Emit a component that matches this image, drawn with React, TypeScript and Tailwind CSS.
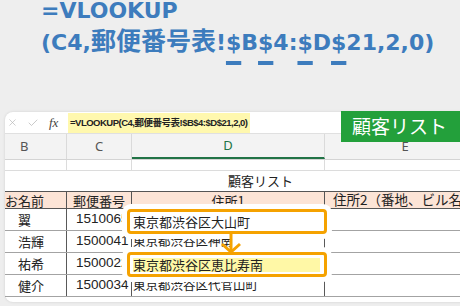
import React from "react";
import { X, Check } from "lucide-react";

const U = ({ children }: { children: React.ReactNode }) => (
  <span className="underline decoration-[4px] underline-offset-[11px] [text-decoration-skip-ink:none]">
    {children}
  </span>
);

const cols = "grid grid-cols-[62px_65px_193px_1fr]";

export default function App() {
  const rows = [
    { name: "翼", zip: "1510065", addr: "" },
    { name: "浩輝", zip: "1500041", addr: "東京都渋谷区神南" },
    { name: "祐希", zip: "1500022", addr: "" },
    { name: "健介", zip: "1500034", addr: "東京都渋谷区代官山町" },
  ];
  return (
    <div className="w-[460px] h-[306px] bg-[#eeeeee] overflow-hidden font-['Liberation_Sans','Noto_Sans_CJK_JP',sans-serif]">
      {/* Title formula */}
      <div className="h-[112px] pl-[41px] font-bold text-[#3d7cbd] text-[22px] leading-[22px] font-['DejaVu_Sans','Noto_Sans_CJK_JP',sans-serif] whitespace-nowrap">
        <div className="h-[22px]">=VLOOKUP</div>
        <div className="mt-[6px] h-[22px]">
          (C4,
          <span className="font-['Noto_Sans_CJK_JP',sans-serif] text-[25px]">郵便番号表</span>!<U>$</U>B<U>$</U>4:<U>$</U>D<U>$</U>21,2,0)
        </div>
      </div>

      {/* Card */}
      <div className="relative ml-[5px] w-[480px] h-[190px] bg-white rounded-[8px] shadow-[0_0_3px_rgba(0,0,0,0.12)]">
        {/* Formula bar */}
        <div className="flex h-[22px] border-b border-[#e0e0e0]">
          <div className="w-[63px] flex items-center">
            <X size={11} strokeWidth={1.4} className="ml-[2px] text-[#b3b3b3]" />
            <Check size={12} strokeWidth={1.4} className="ml-[9px] text-[#b3b3b3]" />
            <span className="ml-[10px] italic text-[13px] text-[#444] font-['Liberation_Serif',serif]">fx</span>
          </div>
          <div className="mt-[1px] h-[20px] w-[182px] bg-[#fff8ae] flex items-center pl-[2px] text-[9.5px] font-bold tracking-[-0.5px] text-[#222] whitespace-nowrap">
            =VLOOKUP(C4,郵便番号表!$B$4:$D$21,2,0)
          </div>
        </div>

        {/* Column headers */}
        <div className={`${cols} h-[26px] bg-[#f3f3f3] border-b border-[#d4d4d4] text-[13px] text-[#555] font-['Noto_Sans',sans-serif]`}>
          <div className="flex items-center pl-[15px] border-r border-[#dadada]">B</div>
          <div className="flex items-center justify-center border-r border-[#dadada]">C</div>
          <div className="flex items-center justify-center border-r border-[#dadada] border-b-2 border-b-[#217346] text-[#217346]">D</div>
          <div className="flex items-center justify-center">E</div>
        </div>

        {/* Row 1 strip */}
        <div className={`${cols} h-[11px] border-b border-[#dcdcdc]`}>
          <div className="border-r border-[#dcdcdc]" />
          <div className="border-r border-[#dcdcdc]" />
          <div className="border-r border-[#dcdcdc]" />
          <div />
        </div>

        {/* Title row */}
        <div className="h-[20px] flex items-center pl-[223px] text-[13px] text-[#222] font-['Noto_Sans_CJK_JP',sans-serif]">
          顧客リスト
        </div>

        {/* Table header */}
        <div className={`${cols} h-[18px] bg-[#fce4d6] border-y border-[#555] text-[13px] leading-none text-[#222] font-['Noto_Sans_CJK_JP',sans-serif] whitespace-nowrap`}>
          <div className="flex items-center border-r border-[#555]">お名前</div>
          <div className="flex items-center justify-center border-r border-[#555]">郵便番号</div>
          <div className="flex items-center justify-center border-r border-[#555]">住所1</div>
          <div className="flex items-center pl-[8px] overflow-hidden text-[13.5px]">住所2（番地、ビル名</div>
        </div>

        {/* Data rows */}
        {rows.map((r) => (
          <div key={r.zip} className={`${cols} h-[22px] border-b border-[#a3a3a3] text-[#222] whitespace-nowrap`}>
            <div className="flex items-center pl-[13px] border-r border-[#595959] text-[13px] font-['Noto_Sans_CJK_JP',sans-serif]">{r.name}</div>
            <div className="flex items-center pl-[9px] border-r border-[#595959] text-[13.5px] overflow-hidden">{r.zip}</div>
            <div className="flex items-center pl-[1px] border-r border-[#595959] text-[12.5px] font-['Noto_Sans_CJK_JP',sans-serif] overflow-hidden">{r.addr}</div>
            <div />
          </div>
        ))}

        {/* Green label */}
        <div className="absolute left-[336px] top-[-1px] w-[130px] h-[31px] bg-[#23a03b] flex items-center pl-[11px] text-white text-[19px] font-['Noto_Sans_CJK_JP',sans-serif]">
          顧客リスト
        </div>

        {/* Highlight boxes */}
        <div className="absolute left-[122px] top-[97px] w-[200px] h-[25px] border-[3px] border-[#f5a200] rounded-[4px] bg-white ring-[5px] ring-white flex items-center pl-[3px] text-[13px] text-[#222] font-['Noto_Sans_CJK_JP',sans-serif]">
          東京都渋谷区大山町
        </div>
        <div className="absolute left-[122px] top-[140px] w-[200px] h-[25px] border-[3px] border-[#f5a200] rounded-[4px] bg-white ring-[5px] ring-white flex items-center text-[13px] text-[#222] font-['Noto_Sans_CJK_JP',sans-serif]">
          <span className="ml-[3px] w-[187px] h-[14px] bg-[#fff8a6] flex items-center leading-none">東京都渋谷区恵比寿南</span>
        </div>

        {/* Arrow */}
        <svg className="absolute left-[212px] top-[120px]" width="28" height="24" viewBox="0 0 28 24" fill="none">
          <path d="M14 2 V19" stroke="#f5a200" strokeWidth="3" />
          <path d="M5 12 L14 20 L23 12" stroke="#f5a200" strokeWidth="3" strokeLinejoin="miter" />
        </svg>
      </div>
    </div>
  );
}
